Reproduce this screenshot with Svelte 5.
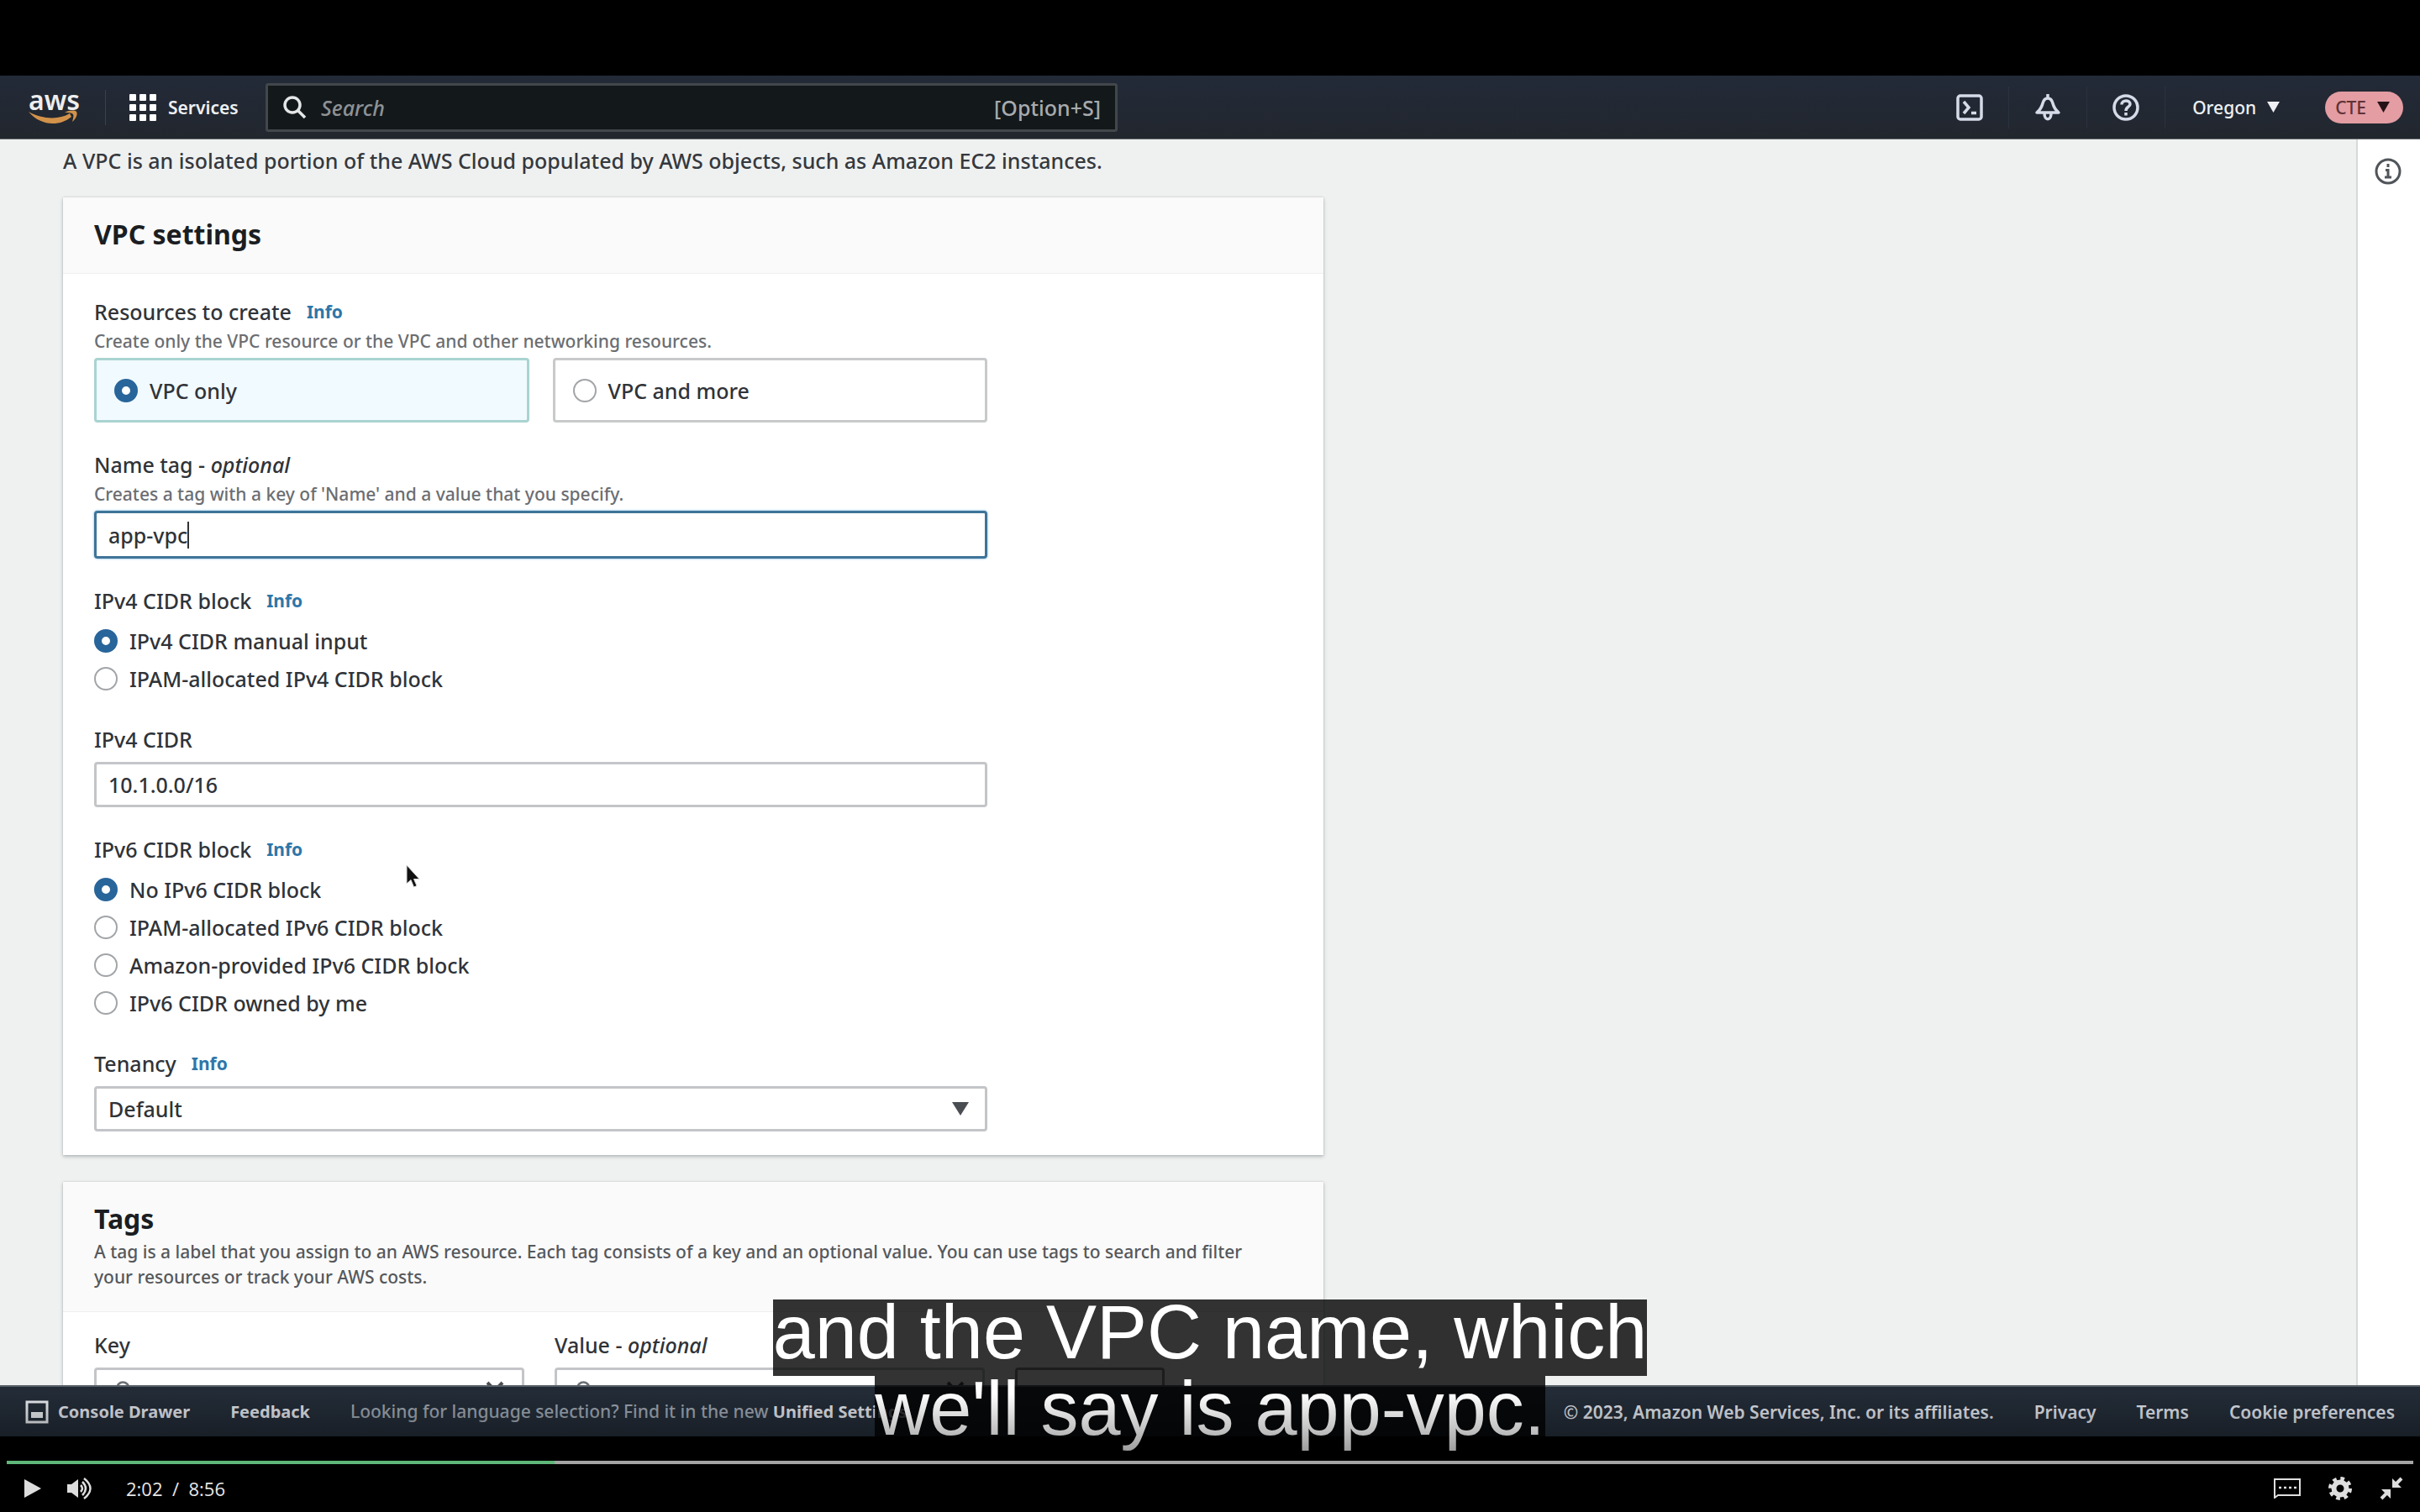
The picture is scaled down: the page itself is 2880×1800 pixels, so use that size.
<script>
  let resource = $state('only');
  let ipv4Mode = $state('manual');
  let ipv6Mode = $state('none');
  let nameTag = $state('app-vpc');
  let cidr = $state('10.1.0.0/16');
  let tenancy = $state('Default');
  const played = 122;
  const duration = 536;

  const resources = [
    { id: 'only', label: 'VPC only' },
    { id: 'more', label: 'VPC and more' }
  ];
  const ipv4Options = [
    { id: 'manual', label: 'IPv4 CIDR manual input' },
    { id: 'ipam', label: 'IPAM-allocated IPv4 CIDR block' }
  ];
  const ipv6Options = [
    { id: 'none', label: 'No IPv6 CIDR block' },
    { id: 'ipam', label: 'IPAM-allocated IPv6 CIDR block' },
    { id: 'amazon', label: 'Amazon-provided IPv6 CIDR block' },
    { id: 'owned', label: 'IPv6 CIDR owned by me' }
  ];
</script>

<main class="player">
  <div class="video">
    <header class="topbar">
      <a class="logo" href="#home" aria-label="AWS home">
        <span>aws</span>
        <svg viewBox="0 0 60 18" width="60" height="18" aria-hidden="true">
          <path d="M0 2 C16 11 36 12 49 4 L51 8 C37 20 14 19 0 2 Z" fill="#d3924a" />
          <path d="M43 3 C49 0 55 0 57 2 C59 5 56 11 52 14 C53 10 54 7 53 5 C51 3 47 3 43 3 Z" fill="#d3924a" />
        </svg>
      </a>
      <button class="services">
        <svg viewBox="0 0 32 32" width="32" height="32" aria-hidden="true" fill="#fff">
          {#each [0, 12, 24] as y}
            {#each [0, 12, 24] as x}
              <rect {x} {y} width="8" height="8" rx="1" />
            {/each}
          {/each}
        </svg>
        Services
      </button>
      <label class="search">
        <svg viewBox="0 0 30 30" width="30" height="30" aria-hidden="true" fill="none" stroke="#e4e6e7" stroke-width="3.5">
          <circle cx="12" cy="12" r="9" />
          <path d="M18 18 L27 27" />
        </svg>
        <input type="search" placeholder="Search" aria-label="Search" />
        <span>[Option+S]</span>
      </label>
      <nav class="tools">
        <button class="tool" aria-label="CloudShell">
          <svg viewBox="0 0 32 32" width="32" height="32" fill="none" stroke="#d5dbe8" stroke-width="3.5">
            <rect x="2" y="2" width="28" height="28" rx="3" />
            <path d="M9 9 L15 16 L9 23 M18 22.500 H24" />
          </svg>
        </button>
        <button class="tool" aria-label="Notifications">
          <svg viewBox="0 0 32 32" width="32" height="32" fill="none" stroke="#d5dbe8" stroke-width="3.500" stroke-linejoin="round">
            <path d="M16 0 V5 M3 22 C8 18 9 15 10 11 C11 7 13 5 16 5 C19 5 21 7 22 11 C23 15 24 18 29 22 Z" />
            <path d="M12 23 C12 32 20 32 20 23" />
          </svg>
        </button>
        <button class="tool" aria-label="Help">
          <svg viewBox="0 0 32 32" width="32" height="32" fill="none" stroke="#d5dbe8" stroke-width="3.500">
            <circle cx="16" cy="16" r="14" />
            <path d="M11 12.500 C11 6.500 21 6.500 21 12 C21 15.500 16 15 16 20" />
            <path d="M16 22 V25.500" />
          </svg>
        </button>
        <button class="region">Oregon
          <svg viewBox="0 0 16 14" width="15" height="13" aria-hidden="true"><path d="M0 0 H16 L8 14 Z" fill="#eef0f3" /></svg>
        </button>
        <button class="account">CTE
          <svg viewBox="0 0 16 14" width="15" height="13" aria-hidden="true"><path d="M0 0 H16 L8 14 Z" fill="#241316" /></svg>
        </button>
      </nav>
    </header>

    <div class="workspace">
      <div class="page">
        <p class="intro">A VPC is an isolated portion of the AWS Cloud populated by AWS objects, such as Amazon EC2 instances.</p>

        <section class="card">
          <div class="card-head"><h2>VPC settings</h2></div>
          <form class="form">
            <div role="radiogroup" aria-labelledby="res-label">
              <div class="label"><span id="res-label">Resources to create</span><a href="#info">Info</a></div>
              <p class="hint">Create only the VPC resource or the VPC and other networking resources.</p>
              <div class="tiles">
                {#each resources as option}
                  <label class="tile" class:selected={resource === option.id}>
                    <input type="radio" name="resource" value={option.id} bind:group={resource} />
                    {option.label}
                  </label>
                {/each}
              </div>
            </div>

            <div>
              <label class="label" for="name-tag"><span>Name tag - <em>optional</em></span></label>
              <p class="hint">Creates a tag with a key of 'Name' and a value that you specify.</p>
              <div class="text-field focused">
                <input id="name-tag" type="text" bind:value={nameTag} />
                <i class="caret"></i>
              </div>
            </div>

            <div role="radiogroup" aria-labelledby="v4-label">
              <div class="label"><span id="v4-label">IPv4 CIDR block</span><a href="#info">Info</a></div>
              <div class="radios">
                {#each ipv4Options as option}
                  <label>
                    <input type="radio" name="ipv4" value={option.id} bind:group={ipv4Mode} />
                    {option.label}
                  </label>
                {/each}
              </div>
            </div>

            <div>
              <label class="label" for="cidr">IPv4 CIDR</label>
              <div class="text-field spaced">
                <input id="cidr" type="text" bind:value={cidr} />
              </div>
            </div>

            <div role="radiogroup" aria-labelledby="v6-label">
              <div class="label"><span id="v6-label">IPv6 CIDR block</span><a href="#info">Info</a></div>
              <div class="radios">
                {#each ipv6Options as option}
                  <label>
                    <input type="radio" name="ipv6" value={option.id} bind:group={ipv6Mode} />
                    {option.label}
                  </label>
                {/each}
              </div>
            </div>

            <div>
              <div class="label"><label for="tenancy">Tenancy</label><a href="#info">Info</a></div>
              <div class="text-field spaced">
                <select id="tenancy" bind:value={tenancy}>
                  <option>Default</option>
                  <option>Dedicated</option>
                </select>
                <svg class="chevron" viewBox="0 0 20 16" width="20" height="16" aria-hidden="true"><path d="M0 0 H20 L10 16 Z" fill="#4a4d52" /></svg>
              </div>
            </div>
          </form>
        </section>

        <section class="card">
          <div class="card-head">
            <h2>Tags</h2>
            <p>A tag is a label that you assign to an AWS resource. Each tag consists of a key and an optional value. You can use tags to search and filter your resources or track your AWS costs.</p>
          </div>
          <div class="tag-row">
            <div>
              <label class="label" for="tag-key">Key</label>
              <div class="text-field spaced combo">
                <svg viewBox="0 0 30 30" width="26" height="26" aria-hidden="true" fill="none" stroke="#6b7075" stroke-width="3"><circle cx="13" cy="12" r="8" /><path d="M19 18 L27 26" /></svg>
                <input id="tag-key" type="text" />
                <svg viewBox="0 0 24 24" width="24" height="24" aria-hidden="true" stroke="#4a4d52" stroke-width="4"><path d="M3 3 L21 21 M21 3 L3 21" /></svg>
              </div>
            </div>
            <div>
              <label class="label" for="tag-value"><span>Value - <em>optional</em></span></label>
              <div class="text-field spaced combo">
                <svg viewBox="0 0 30 30" width="26" height="26" aria-hidden="true" fill="none" stroke="#6b7075" stroke-width="3"><circle cx="13" cy="12" r="8" /><path d="M19 18 L27 26" /></svg>
                <input id="tag-value" type="text" />
                <svg viewBox="0 0 24 24" width="24" height="24" aria-hidden="true" stroke="#4a4d52" stroke-width="4"><path d="M3 3 L21 21 M21 3 L3 21" /></svg>
              </div>
            </div>
            <button class="remove" aria-label="Remove tag"></button>
          </div>
        </section>
      </div>
      <aside class="rail">
        <button aria-label="Open help panel">
          <svg viewBox="0 0 32 32" width="32" height="32" fill="none" stroke="#50555a" stroke-width="3">
            <circle cx="16" cy="16" r="14" />
            <path d="M16 7 V11 M13 14.500 H16 V23 M12 23 H20" />
          </svg>
        </button>
      </aside>
      <svg class="pointer" viewBox="0 0 20 30" width="20" height="30" aria-hidden="true">
        <path d="M2 1 V23 L7 18.500 L10.500 27 L14 25.500 L10.500 17.500 H17 Z" fill="#111" stroke="#d8d8d8" stroke-width="1" />
      </svg>
    </div>

    <footer class="footer">
      <a class="drawer" href="#drawer">
        <svg viewBox="0 0 28 28" width="28" height="28" aria-hidden="true"><rect x="2" y="2" width="24" height="24" fill="none" stroke="#e2e5e9" stroke-width="3" /><rect x="7" y="14" width="14" height="7" fill="#e2e5e9" /></svg>
        Console Drawer
      </a>
      <a class="feedback" href="#feedback">Feedback</a>
      <p>Looking for language selection? Find it in the new <a href="#settings">Unified Settings</a></p>
      <div class="legal">
        <span>© 2023, Amazon Web Services, Inc. or its affiliates.</span>
        <a href="#privacy">Privacy</a>
        <a href="#terms">Terms</a>
        <a href="#cookies">Cookie preferences</a>
      </div>
    </footer>
  </div>

  <div class="captions"><span>and the VPC name, which</span><span>we'll say is app-vpc.</span></div>

  <div class="controls">
    <progress value={played} max={duration} aria-label="Playback position"></progress>
    <div class="buttons">
      <button aria-label="Play">
        <svg viewBox="0 0 20 24" width="20" height="24"><path d="M0 1 L20 12 L0 23 Z" fill="#dedede" /></svg>
      </button>
      <button class="volume" aria-label="Volume">
        <svg viewBox="0 0 32 28" width="32" height="28" fill="none" stroke="#dedede" stroke-width="2.500">
          <path d="M1 9 H6 L14 3 V25 L6 19 H1 Z" fill="#dedede" stroke="none" />
          <path d="M17 10 Q21 14 17 18 M19 6 Q27 14 19 22 M21 2 Q36 14 21 26" />
        </svg>
      </button>
      <span class="time">2:02&nbsp; /&nbsp; 8:56</span>
      <div class="right">
        <button aria-label="Captions">
          <svg viewBox="0 0 32 24" width="32" height="24" fill="none" stroke="#dedede" stroke-width="2">
            <path d="M1 23 V1 H31 V20 H5 Z" />
            <path d="M6 11 H27" stroke-width="2.500" stroke-dasharray="3 3" />
          </svg>
        </button>
        <button aria-label="Settings">
          <svg viewBox="0 0 28 28" width="28" height="28">
            <circle cx="14" cy="14" r="7.500" fill="none" stroke="#dedede" stroke-width="6" />
            <circle cx="14" cy="14" r="11.500" fill="none" stroke="#dedede" stroke-width="5" stroke-dasharray="4.520 4.510" />
          </svg>
        </button>
        <button aria-label="Exit full screen">
          <svg viewBox="0 0 28 28" width="28" height="28" fill="#dedede" stroke="#dedede">
            <path d="M15 2 V13 H26 Z M13 26 V15 H2 Z" stroke="none" />
            <path d="M18 10 L26 2 M10 18 L2 26" stroke-width="4" />
          </svg>
        </button>
      </div>
    </div>
  </div>
</main>

<style>
  :global(body) { background: #000; }
  * { box-sizing: border-box; }
  h2, p { margin: 0; }
  button { border: 0; padding: 0; background: none; color: inherit; font: inherit; }
  a { color: inherit; text-decoration: none; }
  svg { display: block; flex: none; }

  .player {
    position: relative;
    display: flex;
    flex-direction: column;
    justify-content: center;
    min-height: 100vh;
    background: #000;
    font-family: "Noto Sans", "Open Sans", sans-serif;
    font-weight: 500;
    font-size: 25px;
    line-height: 34px;
    color: #303338;
  }
  .video {
    display: flex;
    flex-direction: column;
    aspect-ratio: 16 / 9;
    overflow: hidden;
    background: #eff1f1;
  }

  .topbar {
    display: flex;
    align-items: center;
    flex: none;
    height: 76px;
    padding: 0 20px 0 34px;
    background: linear-gradient(#232a38, #22272e);
    border-bottom: 1px solid #6b7073;
    color: #eef0f3;
    font-size: 21px;
  }
  .logo { display: flex; flex-direction: column; width: 92px; border-right: 1px solid #3a414d; }
  .logo span { font-size: 32px; line-height: 24px; font-weight: 600; color: #eee; }
  .services { display: flex; align-items: center; gap: 14px; width: 190px; padding-left: 28px; font-weight: 600; }
  .search {
    display: flex;
    align-items: center;
    gap: 16px;
    flex: 0 1 1014px;
    height: 58px;
    padding: 0 17px;
    border: 3px solid #42474b;
    border-radius: 3px;
    background: #13181b;
    color: #a7abae;
    font-size: 25px;
  }
  .search input { flex: 1; min-width: 0; border: 0; padding: 0; background: none; color: inherit; font: inherit; outline: 0; }
  .search input::placeholder { color: #8e9295; font-style: italic; opacity: 1; }
  .tools { display: flex; align-items: center; margin-left: auto; }
  .tool { display: grid; place-items: center; width: 93px; height: 50px; border-right: 1px solid #2b3240; }
  .region { display: flex; align-items: center; gap: 13px; padding: 0 54px 0 32px; }
  .account { display: flex; align-items: center; gap: 13px; height: 38px; padding: 0 16px 0 12px; border-radius: 19px; background: #e39da3; color: #5e3238; }

  .workspace { position: relative; display: flex; flex: 1; min-height: 0; overflow: hidden; }
  .page { display: flex; flex-direction: column; flex: 1; min-width: 0; padding: 8px 75px 0; }
  .intro { margin-bottom: 27px; color: #35383d; }
  .card {
    width: 100%;
    max-width: 1500px;
    margin-bottom: 32px;
    background: #fff;
    box-shadow: 0 2px 4px #b4b9b9, 0 0 2px #c3c8c8;
  }
  .card-head { padding: 23px 56px 26px 37px; background: #fafafa; border-bottom: 1px solid #eeefef; }
  .card-head h2 { font-size: 32px; line-height: 41px; font-weight: 700; color: #1b1e22; }
  .card-head p { margin-top: 4px; font-size: 21px; line-height: 30px; color: #55585c; }
  .form { display: flex; flex-direction: column; gap: 33px; max-width: 1137px; padding: 28px 37px; }
  .label { display: flex; align-items: center; gap: 18px; }
  .label a { font-size: 21px; font-weight: 700; color: #2e76a8; }
  .hint { margin: 2px 0 4px; font-size: 21px; line-height: 32px; color: #6b6e72; }
  .tiles { display: grid; grid-template-columns: 1fr 1fr; gap: 28px; }
  .tile { display: flex; align-items: center; gap: 14px; height: 77px; padding: 0 21px; border: 3px solid #c7c9ca; border-radius: 4px; }
  .tile.selected { border-color: #a9d3d1; background: #f1faff; }
  input[type='radio'] {
    appearance: none;
    flex: none;
    width: 28px;
    height: 28px;
    margin: 0;
    border: 2px solid #a2a5a8;
    border-radius: 50%;
    background: #fff;
  }
  input[type='radio']:checked { border: 9px solid #28659a; }
  .text-field { display: flex; align-items: center; position: relative; height: 54px; padding: 0 14px; border: 3px solid #c3c5c8; border-radius: 4px; background: #fff; }
  .text-field.spaced { margin-top: 10px; }
  .text-field.focused { height: 57px; border-color: #3f7498; box-shadow: 0 0 2px 1px #bcdcf2; }
  .text-field input, .text-field select { flex: 1; min-width: 0; appearance: none; border: 0; padding: 0; background: none; color: inherit; font: inherit; outline: 0; }
  .text-field.focused input { flex: none; field-sizing: content; }
  .caret { width: 2px; height: 32px; background: #333; }
  .chevron { margin-right: 5px; }
  .radios { display: flex; flex-direction: column; margin-top: 8px; }
  .radios label { display: flex; align-items: center; gap: 14px; height: 45px; }
  .tag-row { display: grid; grid-template-columns: 512px 512px 178px; gap: 36px; align-items: end; padding: 22px 37px 30px; }
  .combo { padding: 0 20px; }
  .remove { height: 54px; border: 3px solid #8b8e91; border-radius: 4px; }

  .rail { flex: none; width: 76px; padding: 22px 0 0 20px; border-left: 2px solid #d6d9d9; background: #fff; }
  .pointer { position: absolute; left: 482px; top: 863px; }

  .footer {
    display: flex;
    align-items: center;
    flex: none;
    height: 61px;
    padding: 0 30px;
    background: #222b36;
    color: #dadde2;
    border-top: 2px solid #596068;
    font-size: 21px;
    white-space: nowrap;
  }
  .drawer { display: flex; align-items: center; gap: 11px; font-size: 20px; font-weight: 700; }
  .feedback { margin: 0 48px; font-size: 20px; font-weight: 700; }
  .footer p { color: #98a0aa; }
  .footer p a { color: #dadde2; font-size: 20px; font-weight: 700; }
  .legal { display: flex; gap: 48px; margin-left: auto; font-weight: 600; }

  .captions {
    position: absolute;
    left: 0;
    right: 0;
    bottom: 71px;
    display: flex;
    flex-direction: column;
    align-items: center;
    font: 400 90px/79px "Liberation Sans", sans-serif;
    color: #fff;
  }
  .captions span { padding-bottom: 12px; background: rgb(0 0 0 / 80%); }
  .controls {
    position: absolute;
    left: 0;
    right: 0;
    bottom: 0;
    padding: 80px 8px 0;
    background: linear-gradient(transparent, rgb(0 0 0 / 50%) 90px);
    color: #e6e6e6;
  }
  progress { display: block; width: 100%; height: 4px; border: 0; appearance: none; background: #a5a5a5; }
  progress::-webkit-progress-bar { background: #a5a5a5; }
  progress::-webkit-progress-value { background: #5fb87a; }
  .buttons { display: flex; align-items: center; height: 57px; padding: 0 12px 0 21px; font-family: "Open Sans", sans-serif; font-weight: 400; font-size: 22px; }
  .volume { margin: 0 39px 0 30px; }
  .right { display: flex; align-items: center; gap: 33px; margin-left: auto; }
</style>
